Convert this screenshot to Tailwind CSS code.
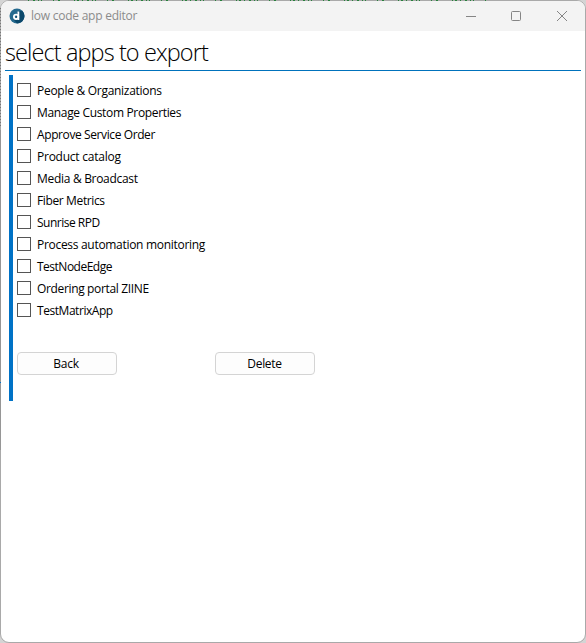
<!DOCTYPE html>
<html lang="en">
<head>
<meta charset="utf-8">
<title>low code app editor</title>
<script src="https://cdn.jsdelivr.net/npm/@tailwindcss/browser@4"></script>
</head>
<body class="relative h-[643px] w-[586px] overflow-hidden bg-[#d4d4d4] font-['Open_Sans','Noto_Sans',sans-serif] text-black">
<main class="flex h-[643px] w-[586px] flex-col overflow-hidden rounded-[9px] border border-[#a9a9a9] bg-white">
  <header class="flex h-[30px] shrink-0 items-center bg-[#f3f3f3] pl-2">
    <svg class="size-4" viewBox="0 0 16 16"><circle cx="8" cy="8" r="7.5" fill="#24698e"/><path d="M13.2 2.7A7.5 7.5 0 0 1 8 15.5L5 12l5-9z" fill="#0b486b"/><circle cx="7.1" cy="8.8" r="2.2" fill="none" stroke="#fff" stroke-width="1.8"/><path d="M9.4 3.5v8.4" stroke="#fff" stroke-width="1.8"/></svg>
    <h1 class="ml-1.5 text-[12px] leading-4 tracking-[-0.24px] whitespace-nowrap text-[#8b8b8b]">low code app editor</h1>
    <svg class="ml-auto mr-[17px] h-3 w-[103px]" viewBox="0 0 103 12" fill="none" stroke="#858585"><path d="M1 6.5h10"/><rect x="46.5" y="1.5" width="9" height="9" rx="1"/><path d="m92 1 10 10m0-10L92 11"/></svg>
  </header>
  <h2 class="mx-1 h-10 shrink-0 border-b border-[#0072bc] text-[23.5px] leading-[42px] font-light tracking-[-0.9px] word-spacing-normal whitespace-nowrap">select apps to export</h2>
  <section class="mt-1 ml-2 h-[326px] shrink-0 border-l-4 border-[#0072c6] pt-1 pl-1 text-[12px] tracking-[-0.3px]">
    <ul class="leading-[22px] whitespace-nowrap">
      <li class="flex h-[22px] items-center gap-1.5"><span class="size-3.5 border border-[#555]"></span><span class="pt-0.5 tracking-[-0.28px]">People &amp; Organizations</span></li>
      <li class="flex h-[22px] items-center gap-1.5"><span class="size-3.5 border border-[#555]"></span><span class="pt-0.5 tracking-[-0.34px]">Manage Custom Properties</span></li>
      <li class="flex h-[22px] items-center gap-1.5"><span class="size-3.5 border border-[#555]"></span><span class="pt-0.5 tracking-[-0.4px]">Approve Service Order</span></li>
      <li class="flex h-[22px] items-center gap-1.5"><span class="size-3.5 border border-[#555]"></span><span class="pt-0.5 tracking-[-0.24px]">Product catalog</span></li>
      <li class="flex h-[22px] items-center gap-1.5"><span class="size-3.5 border border-[#555]"></span><span class="pt-0.5">Media &amp; Broadcast</span></li>
      <li class="flex h-[22px] items-center gap-1.5"><span class="size-3.5 border border-[#555]"></span><span class="pt-0.5 tracking-[-0.37px]">Fiber Metrics</span></li>
      <li class="flex h-[22px] items-center gap-1.5"><span class="size-3.5 border border-[#555]"></span><span class="pt-0.5 tracking-[-0.5px]">Sunrise RPD</span></li>
      <li class="flex h-[22px] items-center gap-1.5"><span class="size-3.5 border border-[#555]"></span><span class="pt-0.5">Process automation monitoring</span></li>
      <li class="flex h-[22px] items-center gap-1.5"><span class="size-3.5 border border-[#555]"></span><span class="pt-0.5 tracking-[-0.5px]">TestNodeEdge</span></li>
      <li class="flex h-[22px] items-center gap-1.5"><span class="size-3.5 border border-[#555]"></span><span class="pt-0.5 tracking-[-0.35px]">Ordering portal ZIINE</span></li>
      <li class="flex h-[22px] items-center gap-1.5"><span class="size-3.5 border border-[#555]"></span><span class="pt-0.5 tracking-[-0.45px]">TestMatrixApp</span></li>
    </ul>
    <div class="mt-[31px] flex gap-[98px]">
      <button class="h-[23px] w-[100px] rounded-[4px] border border-[#d4d4d4] bg-[#fdfdfd] pr-0.5 leading-[21px]">Back</button>
      <button class="h-[23px] w-[100px] rounded-[4px] border border-[#d4d4d4] bg-[#fdfdfd] pr-px leading-[21px]">Delete</button>
    </div>
  </section>
</main>
<svg class="pointer-events-none absolute inset-0 h-[643px] w-[586px]" viewBox="0 0 586 643" fill="none"><path d="M28 .5h460" stroke="#26803a" stroke-dasharray="1 4 2 3 1 2 1 11 1 4 2 14 1 2 2 3"/><path d="M.5 8v120" stroke="#777" stroke-dasharray="1 2"/><path d="M.5 130v320" stroke="#969696"/><path d="M.5 382v1" stroke="#0072c6"/></svg>
</body>
</html>
